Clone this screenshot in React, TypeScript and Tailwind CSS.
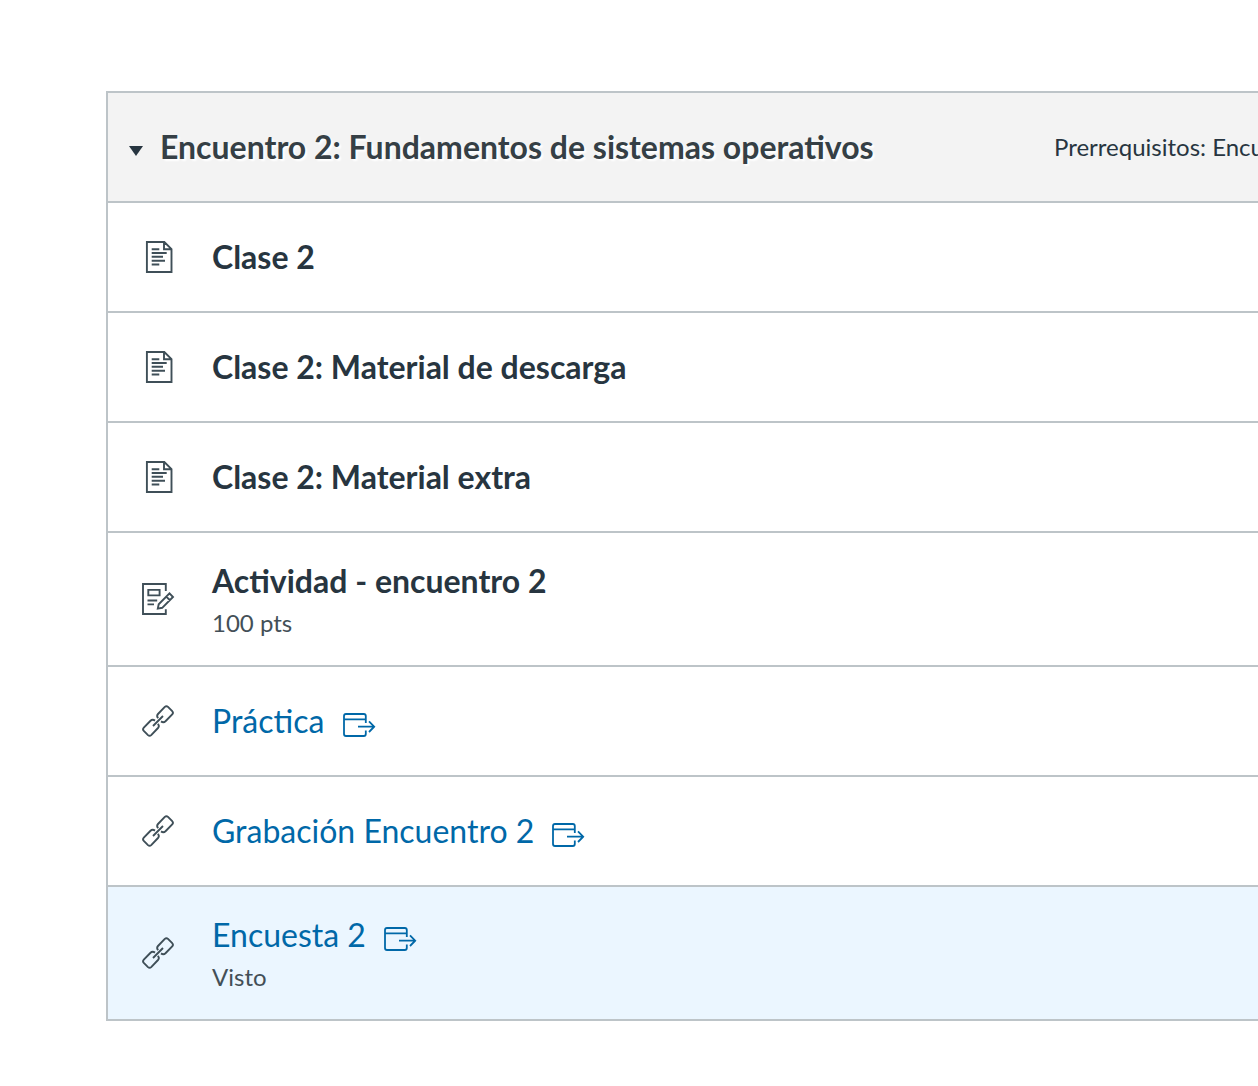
import React from "react";

const ink = "text-[#273540]";

function PageIcon() {
  return (
    <svg className="block" width="28" height="34" viewBox="0 0 28 34" fill="none" stroke="currentColor" strokeWidth="1.9">
      <path d="M1.9 2H19.3L26.5 9.2V32H1.9ZM19 2V9.2H26.5M6.7 9.3H14.3M6.7 13H21.7M6.7 16.8H18M6.7 20.7H20M6.7 24.5H14.3" />
    </svg>
  );
}

function AssignmentIcon() {
  return (
    <svg className="block" width="34" height="34" viewBox="0 0 34 34" fill="none" stroke="currentColor" strokeWidth="1.9">
      <path d="M24.8 9V2H2V32H24.8V27.2M7.3 7.9H18.6V13.4H7.3ZM6.5 18.5H16.2M6.5 22.4H13M16.8 26.6L17.7 22.3L28.5 11.4L32 15L21.2 25.8ZM25 14.3L29.2 18.5" />
    </svg>
  );
}

function LinkIcon() {
  return (
    <svg className="block" width="34" height="34" viewBox="0 0 34 34" fill="none" stroke="currentColor" strokeWidth="1.9">
      <path d="M17.2 14.2Q15.2 12 17 10L23.8 2.9Q25.4 1.4 27 2.9L31.2 7.1Q32.7 8.7 31.2 10.3L24.5 17.2Q22.5 19 20 17.4M16.8 19.8Q18.8 22 17 24L10.2 31.1Q8.6 32.6 7 31.1L2.8 26.9Q1.3 25.3 2.8 23.7L9.5 16.8Q11.5 15 14 16.6M12 22L22 12" />
    </svg>
  );
}

function ExternalIcon() {
  return (
    <svg className="block" width="34" height="26" viewBox="0 0 34 26" fill="none" stroke="currentColor" strokeWidth="1.8">
      <path d="M23.8 11V4Q23.8 2 21.8 2H4Q2 2 2 4V22Q2 24 4 24H21.8Q23.8 24 23.8 22V18.5M2 7.3H23.8M16 14.7H32M27 9.4L32.2 14.7L27 20" />
    </svg>
  );
}

type Item = { title: string; kind: "page" | "assignment" | "link"; note?: string; active?: boolean };

const items: Item[] = [
  { title: "Clase 2", kind: "page" },
  { title: "Clase 2: Material de descarga", kind: "page" },
  { title: "Clase 2: Material extra", kind: "page" },
  { title: "Actividad - encuentro 2", kind: "assignment", note: "100 pts" },
  { title: "Práctica", kind: "link" },
  { title: "Grabación Encuentro 2", kind: "link" },
  { title: "Encuesta 2", kind: "link", note: "Visto", active: true },
];

function Row({ item }: { item: Item }) {
  const link = item.kind === "link";
  return (
    <li className={`flex items-center border-b-2 border-[#bdc4c8] ${item.note ? "h-[134px]" : "h-[110px]"} ${item.active ? "bg-[#ebf6ff]" : "bg-white"}`}>
      <span className={`flex w-[104px] shrink-0 text-[#3f4f58] ${item.kind === "page" ? "pl-[37px]" : "pl-[33px]"}`}>
        {item.kind === "page" ? <PageIcon /> : link ? <LinkIcon /> : <AssignmentIcon />}
      </span>
      <div>
        <div className={`flex items-center text-[32px] leading-[48px] ${link ? "text-[#0068a8]" : "font-bold " + ink}`}>
          <a>{item.title}</a>
          {link && <span className="ml-[17.2px] mt-2"><ExternalIcon /></span>}
        </div>
        {item.note && <div className="text-2xl leading-9 text-[#434f57]">{item.note}</div>}
      </div>
    </li>
  );
}

export default function App() {
  return (
    <main className="h-[1086px] w-[1258px] overflow-hidden bg-white pl-[106px] pt-[91px] font-['Lato',sans-serif]">
      <section className="w-[1300px] border-l-2 border-t-2 border-[#bdc4c8]">
        <header className={`flex h-[110px] items-center border-b-2 border-[#bdc4c8] bg-[#f3f3f3] ${ink}`}>
          <svg className="ml-[21px] mt-2" width="14" height="10" viewBox="0 0 14 10"><path d="M0 0H14L7 10Z" fill="currentColor" /></svg>
          <h2 className="ml-[17px] w-[894px] text-[32px] leading-[48px] font-bold text-[#353f45] [text-shadow:2px_2px_2px_#ffffff]">Encuentro 2: Fundamentos de sistemas operativos</h2>
          <span className="whitespace-nowrap text-2xl">Prerrequisitos: Encuentro 1</span>
        </header>
        <ul>{items.map((item) => <Row key={item.title} item={item} />)}</ul>
      </section>
    </main>
  );
}
